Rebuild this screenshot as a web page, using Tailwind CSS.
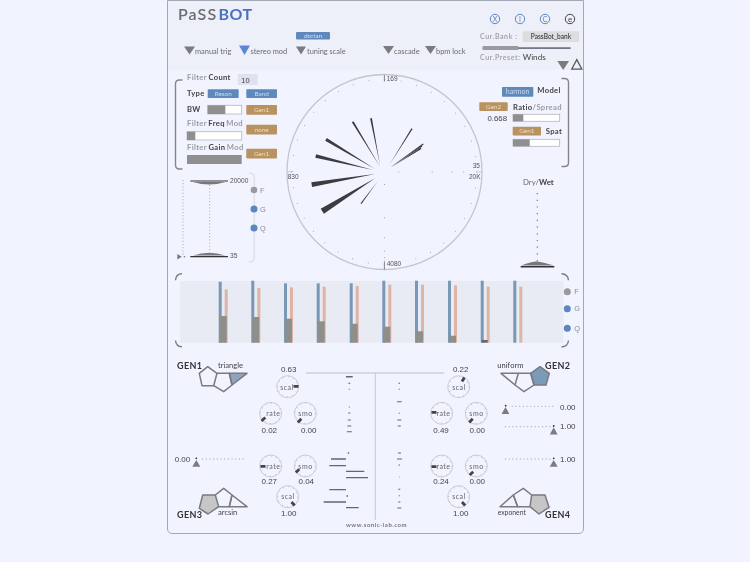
<!DOCTYPE html>
<html lang="en">
<head>
<meta charset="utf-8">
<title>PaSSBOT</title>
<script src="https://cdn.jsdelivr.net/npm/@tailwindcss/browser@4"></script>
</head>
<body class="bg-[#f1f3fe] h-[562px] overflow-hidden font-['Lato',sans-serif]">
<main class="ml-[167px] w-[417px] h-[534px] border border-[#a4a7b4] rounded-b-[5px] flex flex-col overflow-hidden blur-[0.3px]">

<!-- header -->
<header class="h-[69px] bg-[#eef0f9] shrink-0">
<svg viewBox="168 1 415 69" width="415" height="69">
  <text x="178" y="20" class="text-[16px] font-semibold fill-[#6a6a70] tracking-[1.1px]">PaSS</text>
  <text x="218.5" y="20" class="text-[16px] font-bold fill-[#4a70c2] tracking-[.5px]">BOT</text>

  <rect x="296" y="32" width="34" height="7.5" rx="1" class="fill-[#5f88bd]"/>
  <text x="313" y="38" text-anchor="middle" class="text-[6.5px] fill-[#d5e0f0]">dorian</text>

  <g class="fill-[#7b7b7d]">
    <path d="M184 46.5h11l-5.5 8z"/>
    <path d="M296 46.5h10l-5 8z"/>
    <path d="M383 46h11l-5.5 8z"/>
    <path d="M425 46h11l-5.5 8z"/>
  </g>
  <path d="M239 45.5h11l-5.5 9.5z" class="fill-[#5f84d6]"/>
  <g class="text-[7.4px] fill-[#6a6a70]">
    <text x="195" y="54">manual trig</text>
    <text x="250.5" y="54">stereo mod</text>
    <text x="307" y="54">tuning scale</text>
    <text x="394" y="54">cascade</text>
    <text x="436" y="54">bpm lock</text>
  </g>

  <g fill="none" stroke-width="1" class="stroke-[#5c86c8]">
    <circle cx="495" cy="19" r="4.7"/>
    <circle cx="520" cy="19" r="4.7"/>
    <circle cx="545" cy="19" r="4.7"/>
  </g>
  <circle cx="570" cy="19" r="4.7" fill="none" stroke-width="1" class="stroke-[#444]"/>
  <g text-anchor="middle" class="text-[7px] fill-[#5c86c8]">
    <text x="495" y="21.5">X</text>
    <text x="520" y="21.5">I</text>
    <text x="545" y="21.5">C</text>
  </g>
  <text x="570" y="21.7" text-anchor="middle" class="text-[8px] fill-[#444]">e</text>

  <text x="480" y="39" class="text-[7px] font-semibold fill-[#9a9ca4] tracking-[.6px]">Cur.Bank :</text>
  <rect x="522.7" y="31.3" width="56.5" height="10.7" rx="1" class="fill-[#dcdddf]"/>
  <text x="551" y="39.2" text-anchor="middle" class="text-[6.6px] font-semibold fill-[#444]">PassBot_bank</text>

  <rect x="482.7" y="47.3" width="88" height="1.6" class="fill-[#666a78]"/>
  <rect x="482.7" y="46" width="35.5" height="4" class="fill-[#9a9a9e]"/>

  <text x="480" y="59.5" class="text-[7px] font-semibold fill-[#9a9ca4] tracking-[.6px]">Cur.Preset:</text>
  <text x="522.7" y="59.5" class="text-[8.2px] fill-[#444]">Winds</text>

  <path d="M557.3 61h11.7l-5.8 9z" class="fill-[#7b7b7d]"/>
  <path d="M571.7 69.2h10.2l-5.1-9.6z" fill="none" stroke-width="1.2" class="stroke-[#555]"/>
</svg>
</header>

<!-- filters and dial -->
<section class="h-[203px] shrink-0">
<svg viewBox="168 70 415 203" width="415" height="203">
  <!-- brackets -->
  <g fill="none" stroke-width="1.4" stroke-linecap="round" class="stroke-[#85858a]">
    <path d="M182 80h-2.5q-4 0-4 4v81q0 4 4 4h2.5"/>
    <path d="M562 78.5h2.5q4 0 4 4v80q0 4 -4 4h-2.5"/>
  </g>

  <g class="text-[7.6px] font-bold tracking-[.35px] fill-[#444]">
    <text x="187" y="79.5"><tspan class="fill-[#9a9ca4]">Filter</tspan><tspan dx="1.5">Count</tspan></text>
    <text x="187" y="95.5">Type</text>
    <text x="187" y="112">BW</text>
    <text x="187" y="126"><tspan class="fill-[#9a9ca4]">Filter</tspan><tspan dx="1.5">Freq</tspan><tspan dx="1.5" class="fill-[#9a9ca4]">Mod</tspan></text>
    <text x="187" y="149.5"><tspan class="fill-[#9a9ca4]">Filter</tspan><tspan dx="1.5">Gain</tspan><tspan dx="1.5" class="fill-[#9a9ca4]">Mod</tspan></text>
    <text x="537.3" y="92.5">Model</text>
    <text x="513" y="109.5">Ratio<tspan class="fill-[#9a9ca4]">/Spread</tspan></text>
    <text x="545.7" y="133.5">Spat</text>
  </g>

  <rect x="237.7" y="74" width="20" height="11" class="fill-[#dfe2ee]"/>
  <text x="241.3" y="82.5" class="text-[7.4px] font-['Liberation_Sans'] fill-[#444]">10</text>

  <!-- blue buttons -->
  <g class="fill-[#5f88bd]">
    <rect x="207.7" y="89.3" width="31" height="8.8" rx=".8"/>
    <rect x="246.3" y="89.3" width="30.7" height="8.8" rx=".8"/>
    <rect x="502" y="87" width="31.3" height="9.7" rx=".8"/>
  </g>
  <g text-anchor="middle" class="text-[6.4px] fill-[#cfdcee]">
    <text x="223.2" y="95.8">Reson</text>
    <text x="261.6" y="95.8">Band</text>
    <text x="517.6" y="94.2" class="text-[7px]">harmon</text>
  </g>

  <!-- brown buttons -->
  <g class="fill-[#b9925f]">
    <rect x="246.3" y="105" width="30.7" height="9.7" rx=".8"/>
    <rect x="246.3" y="124.7" width="30.7" height="9.7" rx=".8"/>
    <rect x="246.3" y="148.7" width="30.7" height="9.7" rx=".8"/>
    <rect x="479.3" y="102.3" width="28.4" height="8.8" rx=".8"/>
    <rect x="512.7" y="126.7" width="28.3" height="8.8" rx=".8"/>
  </g>
  <g text-anchor="middle" class="text-[6.4px] fill-[#ecdcc4]">
    <text x="261.6" y="112">Gen1</text>
    <text x="261.6" y="131.5">none</text>
    <text x="261.6" y="155.5">Gen1</text>
    <text x="493.5" y="109">Gen2</text>
    <text x="526.8" y="133.4">Gen1</text>
  </g>

  <!-- sliders -->
  <g stroke-width=".8" class="fill-white stroke-[#b4b6bc]">
    <rect x="207.7" y="105.3" width="34" height="8.7"/>
    <rect x="187" y="131.7" width="54.7" height="8.3"/>
    <rect x="513" y="114.3" width="46.7" height="7"/>
    <rect x="513" y="139.3" width="46.7" height="7"/>
  </g>
  <g class="fill-[#8f8f90]">
    <rect x="207.7" y="105.3" width="17.6" height="8.7"/>
    <rect x="187" y="131.7" width="8.3" height="8.3"/>
    <rect x="187" y="155" width="54.7" height="9"/>
    <rect x="513" y="114.3" width="10.3" height="7"/>
    <rect x="513" y="139.3" width="16.7" height="7"/>
  </g>
  <text x="507" y="120.5" text-anchor="end" class="text-[7.8px] font-['Liberation_Sans'] fill-[#444]">0.668</text>

  <!-- dial -->
  <circle cx="384.5" cy="172" r="97.5" fill="none" stroke-width="1.3" class="stroke-[#c3c5cf]"/>
  <g stroke-width=".9" class="stroke-[#77777d]">
    <path d="M384.4 75v6.5M384.4 262v7.5"/>
  </g>
  <g stroke-width=".9" class="stroke-[#c3c5cf]">
    <path d="M287 171.8h6M476 171.8h6"/>
  </g>
  <g class="text-[6.5px] font-['Liberation_Sans'] fill-[#55555a]">
    <text x="386.7" y="80.5">169</text>
    <text x="386.7" y="266">4080</text>
    <text x="287.7" y="178.7">830</text>
    <text x="472.7" y="168">35</text>
    <text x="469" y="178.7">20K</text>
  </g>
  <!-- dial graduations -->
  <g stroke-width="1" stroke-linecap="round" stroke-dasharray="0 16.14" fill="none" class="stroke-[#8e8f96]">
    <circle cx="384.4" cy="172" r="92.5" transform="rotate(10 384.4 172)"/>
  </g>
  <g class="fill-[#8e8f96]">
    <rect x="384" y="184" width=".9" height=".9"/><rect x="384" y="217.3" width=".9" height=".9"/>
    <rect x="384" y="237.3" width=".9" height=".9"/><rect x="384" y="250.7" width=".9" height=".9"/>
    <rect x="384" y="257.3" width=".9" height=".9"/><rect x="384" y="260.7" width=".9" height=".9"/>
    <rect x="398.4" y="171.6" width=".9" height=".9"/><rect x="431.7" y="171.6" width=".9" height=".9"/>
    <rect x="451.7" y="171.6" width=".9" height=".9"/><rect x="463.3" y="171.6" width=".9" height=".9"/>
  </g>
  <!-- dial rays -->
  <g class="fill-[#3c3c40]">
    <polygon points="380,165 371.9,118.1 370.1,118.5"/>
    <polygon points="380,166.7 353.55,121.2 351.85,122.2"/>
    <polygon points="375,169 326.8,138 325.2,140.7"/>
    <polygon points="373.3,170 316.1,154.2 315.3,157.8"/>
    <polygon points="375,174 312.1,187.1 311.3,182.3"/>
    <polygon points="375,178.3 323.9,213.8 320.7,208.8"/>
    <polygon points="377.3,181.7 361.5,204.1 360.5,203.3"/>
    <polygon points="389.3,165 412.6,129.1 411.4,128.3"/>
    <polygon points="391,166.7 423.7,144.6 422.9,143.4"/>
    <polygon points="391,167 422.4,146.6 421.6,145.4"/>
    <polygon points="391,167.3 421.4,148.9 420.6,147.7"/>
  </g>

  <!-- frequency range -->
  <g fill="none" stroke-width="1" stroke-dasharray="1 2.2" class="stroke-[#a5a7ae]">
    <path d="M183 180v77M209.7 185v66"/>
  </g>
  <g stroke-width="1.2" class="stroke-[#333337]">
    <path d="M190.3 181h37.7M190.3 256.7h37.7"/>
  </g>
  <g class="fill-[#77777c]">
    <path d="M193 182h32.3q-16 5 -32.3 0z"/>
    <path d="M193 255.6h32.3q-16 -5.5 -32.3 0z"/>
    <path d="M177.3 254l4.4 2.7l-4.4 2.7z"/>
    <circle cx="184.5" cy="256.7" r=".8"/>
  </g>
  <g class="text-[6.6px] font-['Liberation_Sans'] fill-[#55555a]">
    <text x="230" y="183.2">20000</text>
    <text x="230" y="258.3">35</text>
  </g>
  <path d="M249 173q5.3 0 5.3 5v79q0 5 -5.3 5" fill="none" stroke-width="1.6" class="stroke-[#e0e2ea]"/>
  <circle cx="254" cy="190" r="3.3" class="fill-[#9a9a9c]"/>
  <circle cx="254" cy="209" r="3.5" class="fill-[#5c86c2]"/>
  <circle cx="254" cy="228" r="3.5" class="fill-[#5c86c2]"/>
  <g class="text-[7.4px] font-['Liberation_Sans'] fill-[#8a8a90]">
    <text x="260" y="192.6">F</text>
    <text x="260" y="211.5">G</text>
    <text x="260" y="230.6">Q</text>
  </g>

  <!-- dry wet -->
  <text x="523" y="184.5" class="text-[7.8px] fill-[#6a6a70]">Dry/<tspan class="font-bold fill-[#444]">Wet</tspan></text>
  <path d="M537.3 193v69" fill="none" stroke-width="1.2" stroke-dasharray="1.2 5.5" class="stroke-[#77777d]"/>
  <path d="M521 265.5h33q-12 -3.500 -16.500 -4t-16.500 4z" class="fill-[#77777c]"/>
  <path d="M520.7 266.700h33.600" stroke-width="1.400" class="stroke-[#333337]"/>
</svg>
</section>

<!-- filter bars -->
<section class="h-[77px] shrink-0">
<svg viewBox="168 273 415 77" width="415" height="77">
  <rect x="180" y="281" width="383.300" height="61.700" class="fill-[#e9ebf4]"/>
  <g fill="none" stroke-width="1.400" class="stroke-[#7c7c82]">
    <path d="M182 273.700q-6 0 -6.500 6.500M175.500 340.500q.5 6 6.500 6.300"/>
    <path d="M561.500 273.700q6.500 .3 7 6.500M568.500 340.500q-.5 6 -7 6.500"/>
  </g>
  <g class="fill-[#7998b5]">
    <rect x="218.700" y="281.700" width="3" height="61"/>
    <rect x="251.300" y="280.700" width="3" height="62"/>
    <rect x="284" y="283.300" width="3" height="59.400"/>
    <rect x="316.700" y="283.300" width="3" height="59.400"/>
    <rect x="349.700" y="283.300" width="3" height="59.400"/>
    <rect x="382.300" y="280.700" width="3" height="62"/>
    <rect x="415" y="280.700" width="3" height="62"/>
    <rect x="448" y="280.700" width="3" height="62"/>
    <rect x="480.700" y="280.700" width="3" height="62"/>
    <rect x="513.300" y="280.700" width="3" height="62"/>
  </g>
  <g class="fill-[#deb4a4]">
    <rect x="224.700" y="289.300" width="3" height="53.400"/>
    <rect x="257.300" y="288" width="3" height="54.700"/>
    <rect x="290" y="287.300" width="3" height="55.400"/>
    <rect x="322.700" y="286.700" width="3" height="56"/>
    <rect x="355.700" y="286" width="3" height="56.700"/>
    <rect x="388.300" y="284.700" width="3" height="58"/>
    <rect x="421" y="284.700" width="3" height="58"/>
    <rect x="454" y="285.300" width="3" height="57.400"/>
    <rect x="486.700" y="286.700" width="3" height="56"/>
    <rect x="519.300" y="286.700" width="3" height="56"/>
  </g>
  <g class="fill-[#8e8e8b]">
    <rect x="219.700" y="316" width="7" height="26.700"/>
    <rect x="252.300" y="317" width="7" height="25.700"/>
    <rect x="285" y="318.700" width="7" height="24"/>
    <rect x="317.700" y="321.300" width="7" height="21.400"/>
    <rect x="350.700" y="323.700" width="7" height="19"/>
    <rect x="383.300" y="326.700" width="7" height="16"/>
    <rect x="416" y="331.300" width="7" height="11.400"/>
    <rect x="449" y="335.700" width="7" height="7"/>
    <rect x="481.700" y="340" width="6" height="2.700" class="fill-[#66666a]"/>
  </g>
  <circle cx="567.300" cy="291.700" r="3.500" class="fill-[#9a9a9c]"/>
  <circle cx="567.300" cy="308.700" r="3.500" class="fill-[#5c86c2]"/>
  <circle cx="567.300" cy="328.300" r="3.500" class="fill-[#5c86c2]"/>
  <g class="text-[7.4px] font-['Liberation_Sans'] fill-[#8a8a90]">
    <text x="574.300" y="293.500">F</text>
    <text x="574.300" y="311">G</text>
    <text x="574.300" y="330.500">Q</text>
  </g>
</svg>
</section>

<!-- generators -->
<section class="flex-1">
<svg viewBox="168 350 415 183" width="415" height="183">
  <defs>
    <g id="knob">
      <circle r="11" fill="none" stroke-width=".6" class="stroke-[#b0b2ba]"/>
      <circle r="10" fill="none" stroke-width="1.2" stroke-dasharray=".5 4.740" class="stroke-[#a0a2aa]"/>
    </g>
  </defs>

  <!-- generator shapes -->
  <g stroke-width="1.500" stroke-linejoin="round" class="stroke-[#7a7a7f]">
    <polygon points="229.300,373.300 247,373.300 232,385" class="fill-[#8fa4be]"/>
    <polygon points="207.700,366.700 217,373.300 213.700,385.700 202,385.700 199.300,373.300" fill="none"/>
    <polyline points="217,373.300 229.300,373.300 232,385 223.700,391.700 213.700,385.700" fill="none"/>

    <polygon points="530.700,373.300 540,366.700 549.300,373.300 546,385 534,385" class="fill-[#7b9ab8]"/>
    <polygon points="501,373.300 530.700,373.300 534,385 524,391.700 515,385" fill="none"/>
    <path d="M518.300 373.300L515 385" fill="none"/>

    <polygon points="199.300,508.300 202.700,495 215.300,495 218.700,506.700 208,514" class="fill-[#c6c6c6]"/>
    <polyline points="215.300,495 223.700,488.300 232,495 229.300,506.700 218.700,506.700" fill="none"/>
    <polygon points="232,495 247,506.700 229.300,506.700" fill="none"/>

    <polygon points="531.700,495 545,495 549,507.300 539,514 530,506.700" class="fill-[#c6c6c6]"/>
    <polyline points="531.700,495 523.300,488.300 513.300,495 517.700,506.700 530,506.700" fill="none"/>
    <polygon points="513.300,495 517.700,506.700 500,506.700" fill="none"/>
  </g>

  <g class="text-[9px] font-bold fill-[#333337] tracking-[.4px]">
    <text x="177" y="368.700">GEN1</text>
    <text x="545" y="368.700">GEN2</text>
    <text x="177" y="517.700">GEN3</text>
    <text x="545" y="517.700">GEN4</text>
  </g>
  <g class="text-[7.600px] fill-[#444449]">
    <text x="218" y="368.300">triangle</text>
    <text x="497.300" y="368.300">uniform</text>
    <text x="218" y="515">arcsin</text>
    <text x="497.700" y="515" class="text-[6.800px]">exponent</text>
  </g>

  <!-- centre axis -->
  <path d="M306 373h138.300" stroke-width="1" class="stroke-[#bcbec6]"/>
  <path d="M375.300 373v147" stroke-width="1" class="stroke-[#c6c8d0]"/>

  <!-- level ticks -->
  <g stroke-width="1.100" class="stroke-[#66666b]">
    <path d="M346 376.700h6.700" stroke-width="1.500"/>
    <path d="M348.300 383.300h2M348.800 389.300h1M348.800 407h1M348.300 413h2M347.800 420h3M347.300 426h4M346.800 431.700h5"/>
    <path d="M347.700 453h1.500M331 459h15M329.300 465.700h16.700M346 471.300h18.300M346 477.700h22M329.300 489.700h16.700M346.500 496h1.500M323.700 502h22.300M346 507.700h12.700" stroke-width="1.300"/>
    <path d="M398.500 383.300h1.500M398.800 389.300h1M397 401.700h4.700M398.800 413.300h1M397.300 420h4M397.800 426h3"/>
    <path d="M398 453h3M397 459h5M398.600 465h1.500M399 477h.500M398.300 489.300h2M398.800 495.700h1M398.300 502h2M397.300 508h4"/>
  </g>

  <!-- knobs -->
  <use href="#knob" x="287.700" y="386.700"/>
  <use href="#knob" x="270.700" y="413.300"/>
  <use href="#knob" x="305.300" y="413.300"/>
  <use href="#knob" x="458.700" y="386.700"/>
  <use href="#knob" x="441.700" y="413.300"/>
  <use href="#knob" x="476.300" y="413.300"/>
  <use href="#knob" x="270.700" y="466"/>
  <use href="#knob" x="305.300" y="466"/>
  <use href="#knob" x="287.700" y="496.700"/>
  <use href="#knob" x="441.700" y="466"/>
  <use href="#knob" x="476.300" y="466"/>
  <use href="#knob" x="458.700" y="496.700"/>

  <g stroke-width="2.800" class="stroke-[#444448]">
    <path d="M293.500 386.300h5"/>
    <path d="M261.500 421l3.800 -3.500"/>
    <path d="M297.800 422.500l3.500 -3.700"/>
    <path d="M462 381.500l2.400 -4"/>
    <path d="M431.500 412.300h5"/>
    <path d="M469.200 422.500l3.500 -3.700"/>
    <path d="M260.500 466.300h5"/>
    <path d="M295.800 472.500l3.500 -3.300"/>
    <path d="M291.500 502l3.200 3.500"/>
    <path d="M431.500 466.700h5"/>
    <path d="M469.700 475l3.500 -3.300"/>
    <path d="M462 502l3.200 3.500"/>
  </g>

  <g text-anchor="middle" class="text-[7px] fill-[#66666b] tracking-[.5px]">
    <text x="287" y="389.500">scal</text>
    <text x="273.300" y="416.300">rate</text>
    <text x="305.500" y="416.300">smo</text>
    <text x="459" y="389.500">scal</text>
    <text x="443.500" y="416.300">rate</text>
    <text x="476.500" y="416.300">smo</text>
    <text x="273.300" y="468.800">rate</text>
    <text x="305.500" y="468.800">smo</text>
    <text x="288" y="499">scal</text>
    <text x="443.500" y="468.800">rate</text>
    <text x="476.500" y="468.800">smo</text>
    <text x="459" y="499">scal</text>
  </g>

  <g text-anchor="middle" class="text-[8px] font-['Liberation_Sans'] fill-[#444449]">
    <text x="288.700" y="372">0.63</text>
    <text x="460.700" y="372">0.22</text>
    <text x="269.300" y="432.500">0.02</text>
    <text x="308.700" y="432.500">0.00</text>
    <text x="441" y="432.500">0.49</text>
    <text x="477.300" y="432.500">0.00</text>
    <text x="269.300" y="484">0.27</text>
    <text x="306.300" y="484">0.04</text>
    <text x="441" y="484">0.24</text>
    <text x="477.300" y="484">0.00</text>
    <text x="288.700" y="515.700">1.00</text>
    <text x="460.700" y="515.700">1.00</text>
  </g>

  <!-- range sliders -->
  <g fill="none" stroke-width="1" stroke-dasharray="1 2.700" class="stroke-[#9a9ca4]">
    <path d="M511.700 406.300h42M505 426.700h46.700M202 459h43.300M505 459h46.700"/>
  </g>
  <g class="fill-[#7c7c80]">
    <path d="M505.500 407l3.900 7h-7.800z"/>
    <path d="M553.700 427.300l3.900 7.300h-7.800z"/>
    <path d="M196.300 460l4 6.700h-8z"/>
    <path d="M553.700 460l4 6.700h-8z"/>
  </g>
  <g class="fill-[#333337]">
    <circle cx="505.700" cy="405.700" r=".9"/>
    <circle cx="553.700" cy="426" r=".9"/>
    <circle cx="196.300" cy="458.300" r=".9"/>
    <circle cx="553.700" cy="458.300" r=".9"/>
  </g>
  <g class="text-[8px] font-['Liberation_Sans'] fill-[#444449]">
    <text x="560" y="409.500">0.00</text>
    <text x="560" y="428.500">1.00</text>
    <text x="174.700" y="461.500">0.00</text>
    <text x="560" y="461.500">1.00</text>
  </g>

  <text x="346" y="526.500" class="text-[6px] font-bold fill-[#77777d] tracking-[.5px]">www.sonic-lab.com</text>
</svg>
</section>
</main>
</body>
</html>
